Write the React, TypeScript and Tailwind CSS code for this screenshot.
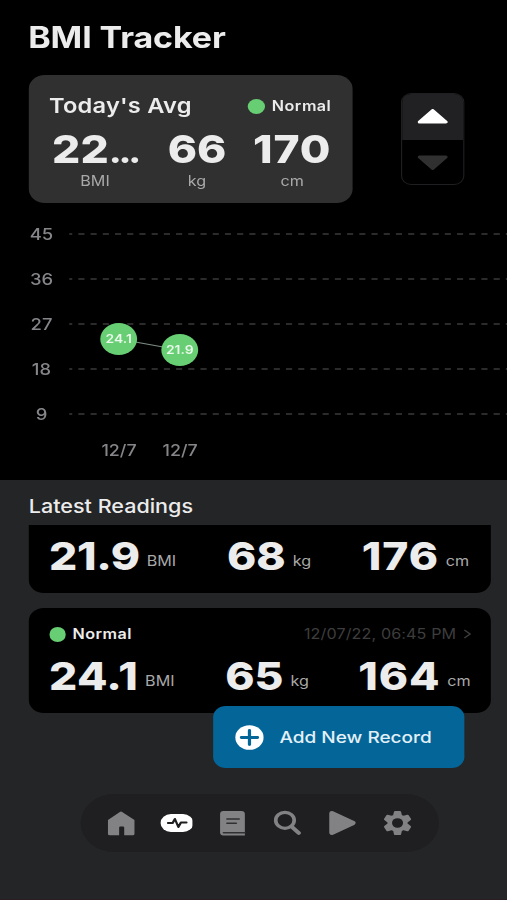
import type { ReactNode } from 'react';

const levels = [45, 36, 27, 18, 9];

const points = [
  { date: '12/7', value: '24.1', x: 43, y: 105 },
  { date: '12/7', value: '21.9', x: 96, y: 116 },
];

const averages = [
  { value: '22', unit: 'BMI', width: 'w-[80px]', truncated: true },
  { value: '66', unit: 'kg', width: 'w-[52px]' },
  { value: '170', unit: 'cm', width: 'w-[68px] tracking-[0.7px]' },
];

function Status() {
  return (
    <div className="flex items-center gap-[6px]">
      <div className="w-[14.5px] h-[15px] rounded-full bg-[#67ce73]" />
      <span className="text-[14px] leading-5 font-semibold tracking-[0.4px]">Normal</span>
    </div>
  );
}

function Measure({ value, unit, className = '' }: { value: string; unit: string; className?: string }) {
  return (
    <div className={`flex items-baseline gap-[6px] ${className}`}>
      <span className="text-[38.5px] leading-10 font-extrabold">{value}</span>
      <span className="relative -top-1 text-[14px] tracking-normal text-[#a9a9a9]">{unit}</span>
    </div>
  );
}

function NavIcon({ children }: { children: ReactNode }) {
  return (
    <svg className="w-7 h-7" viewBox="0 0 28 28" fill="#828284">
      {children}
    </svg>
  );
}

function Chart() {
  return (
    <div className="flex h-[268px]">
      <div className="w-[60px] pl-[12px] flex flex-col text-center text-[16px] font-medium text-[#85858a]">
        {levels.map((level) => (
          <span key={level} className="h-[45px] leading-[45px]">{level}</span>
        ))}
      </div>
      <svg className="w-[380px] h-[259px]" viewBox="0 0 380 259">
        {levels.map((level, i) => (
          <line
            key={level}
            x1="0"
            x2="380"
            y1={22 + i * 45}
            y2={22 + i * 45}
            stroke="#3a3a3a"
            strokeWidth="1.6"
            strokeDasharray="5.3 5.3"
            strokeDashoffset="2.6"
          />
        ))}
        <line x1="43" y1="127" x2="96" y2="138" stroke="#7d8c84" strokeWidth="1.2" />
        {points.map((p) => (
          <g key={p.value} textAnchor="middle">
            <circle cx={p.x} cy={p.y + 22} r="16" fill="#67ce73" />
            <text x={p.x} y={p.y + 26.2} fontSize="12" fontWeight="600" fill="#e8f8ea">{p.value}</text>
            <text x={p.x + 0.3} y="244" fontSize="15.5" fontWeight="500" fill="#85858a">{p.date}</text>
          </g>
        ))}
      </svg>
    </div>
  );
}

export default function App() {
  return (
    <div className="w-[507px] h-[900px] overflow-hidden bg-black">
      {/* The 440px layout is stretched to the full width */}
      <div className="w-[440px] h-[900px] origin-top-left scale-x-[1.15227] flex flex-col text-[#ececec] font-['Inter',sans-serif]">
        <h1 className="h-[75px] pl-[24.5px] pt-[17px] text-[29.5px] leading-10 font-bold tracking-[-0.1px]">BMI Tracker</h1>
        <div className="flex items-start h-[137px] pl-[24.5px]">
          <div className="w-[281.5px] h-[128px] rounded-[14px] bg-[#303030] pl-[18px] pr-[18.5px] pt-[19px]">
            <div className="flex items-center justify-between h-6">
              <span className="text-[20.5px] font-semibold tracking-[0.2px]">Today's Avg</span>
              <Status />
            </div>
            <div className="flex justify-between mt-[11px]">
              {averages.map((a) => (
                <div key={a.unit} className={`flex flex-col items-center ${a.width}`}>
                  <span className="h-10 text-[38.5px] leading-10 font-extrabold whitespace-nowrap">
                    {a.value}
                    {a.truncated && <span className="tracking-[-2.8px] text-[32px] leading-none">...</span>}
                  </span>
                  <span className="text-[14px] leading-[23px] tracking-normal text-[#a9a9a9]">{a.unit}</span>
                </div>
              ))}
            </div>
          </div>
          <div className="ml-[42px] mt-[18px] w-[55px] h-[92px] rounded-[9px] border border-[#1f1f21] overflow-hidden">
            <div className="h-[46px] bg-[#212123] flex items-center justify-center">
              <svg className="w-7 h-4" viewBox="0 0 28 16">
                <path d="M13.5 1.5 L25 13 H2 Z" fill="#fff" stroke="#fff" strokeWidth="3" strokeLinejoin="round" />
              </svg>
            </div>
            <div className="h-[45px] flex items-center justify-center">
              <svg className="w-7 h-4" viewBox="0 0 28 16">
                <path d="M13.5 13.5 L25 2 H2 Z" fill="#303030" stroke="#303030" strokeWidth="3" strokeLinejoin="round" />
              </svg>
            </div>
          </div>
        </div>
        <Chart />
        <section className="relative h-[420px] bg-[#242527]">
          <h2 className="h-[45px] pl-[25px] pt-[13px] text-[18.7px] leading-7 font-medium">Latest Readings</h2>
          <div className="ml-[24.5px] w-[401.5px] flex flex-col gap-[15px]">
            <div className="h-[68px] rounded-b-[13px] bg-black pl-[18px] pt-[11px] flex">
              <Measure value="21.9" unit="BMI" className="w-[154.5px] tracking-[-0.3px]" />
              <Measure value="68" unit="kg" className="w-[117px]" />
              <Measure value="176" unit="cm" className="tracking-[0.8px]" />
            </div>
            <div className="h-[105px] rounded-[13px] bg-black pl-[18px] pr-[17px] pt-[16px]">
              <div className="flex items-center justify-between">
                <Status />
                <div className="flex items-center gap-[6px] text-[14px] leading-5 text-[#3d3d3d] tracking-[0.1px]">
                  12/07/22, 06:45 PM
                  <svg className="w-[7px] h-[10px]" viewBox="0 0 7 10" fill="none" stroke="#3d3d3d" strokeWidth="1.3">
                    <path d="M1 1 L6 5 L1 9" />
                  </svg>
                </div>
              </div>
              <div className="flex mt-[12px]">
                <Measure value="24.1" unit="BMI" className="w-[153px] tracking-[0.3px]" />
                <Measure value="65" unit="kg" className="w-[115.5px]" />
                <Measure value="164" unit="cm" className="tracking-[0.7px]" />
              </div>
            </div>
          </div>
          <button className="absolute left-[184.5px] top-[226px] w-[218px] h-[62px] rounded-[11px] bg-[#046698] flex items-center pl-[19px] gap-[14px]">
            <svg className="w-[25px] h-[25px]" viewBox="0 0 25 25">
              <circle cx="12.5" cy="12.5" r="12.3" fill="#fff" />
              <path d="M12.5 5.5 V19.5 M5.5 12.5 H19.5" stroke="#046698" strokeWidth="2.8" strokeLinecap="round" />
            </svg>
            <span className="text-[16.5px] font-medium text-[#e3f0f7]">Add New Record</span>
          </button>
          <nav className="mt-[81px] ml-[70px] w-[311px] h-[58px] rounded-full bg-[#1f1f21] flex items-center pl-[21px] gap-5">
            <NavIcon>
              <path d="M13 2.9 Q14 2.1 15 2.9 L25.7 11 V25 Q25.7 26.3 24.2 26.3 H16.8 V18.5 Q16.8 17.5 15.8 17.5 H13.4 Q12.4 17.5 12.4 18.5 V26.3 H4.2 Q2.7 26.3 2.7 25 V11 Z" />
            </NavIcon>
            <NavIcon>
              <rect x="0.3" y="5" width="28.5" height="18" rx="9" fill="#fff" />
              <path d="M6.8 14 H10.8 L12.8 10 L15.8 18 L18 13.5 H22.8" fill="none" stroke="#1f1f21" strokeWidth="2" strokeLinecap="round" strokeLinejoin="round" />
            </NavIcon>
            <NavIcon>
              <path d="M7 2 H22.5 Q25.5 2 25.5 5 V26.5 H7 Q4 26.5 4 23.5 V5 Q4 2 7 2 Z" />
              <path d="M10 10 H20.5 M10 14.2 H18 M7 23.8 H25.5" stroke="#303032" strokeWidth="1.6" strokeLinecap="round" />
            </NavIcon>
            <NavIcon>
              <circle cx="12.3" cy="11.3" r="8" fill="none" stroke="#828284" strokeWidth="3.2" />
              <path d="M18 17.5 L24.3 24" stroke="#828284" strokeWidth="3.8" strokeLinecap="round" />
            </NavIcon>
            <NavIcon>
              <path d="M5 4.3 L23.3 14 L5 23.7 Z" stroke="#828284" strokeWidth="4.5" strokeLinejoin="round" />
            </NavIcon>
            <NavIcon>
              <path
                d="M12 3 H16 L16.8 6.8 L18.8 8 L22.7 6.8 L24.7 10.2 L21.7 12.8 V15.2 L24.7 17.8 L22.7 21.2 L18.8 20 L16.8 21.2 L16 25 H12 L11.2 21.2 L9.2 20 L5.3 21.2 L3.3 17.8 L6.3 15.2 V12.8 L3.3 10.2 L5.3 6.8 L9.2 8 L11.2 6.8 Z"
                stroke="#828284"
                strokeWidth="2.2"
                strokeLinejoin="round"
              />
              <circle cx="14" cy="14" r="4.8" fill="#1f1f21" />
            </NavIcon>
          </nav>
          <div className="mt-[47px] h-px bg-[#2a1e22]" />
        </section>
      </div>
    </div>
  );
}
